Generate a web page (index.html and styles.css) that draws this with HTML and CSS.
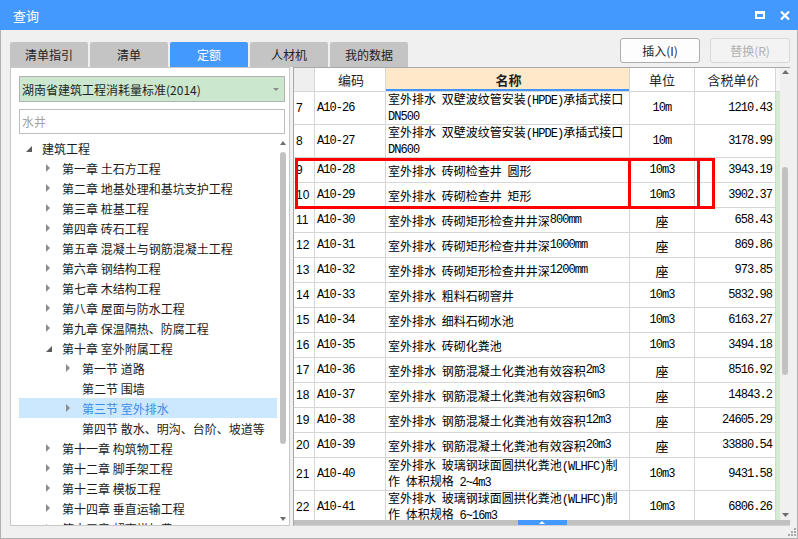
FILE: index.html
```html
<!DOCTYPE html>
<html lang="zh-CN">
<head>
<meta charset="utf-8">
<title>查询</title>
<link rel="stylesheet" href="styles.css">
</head>
<body>
<div class="win">
  <div class="titlebar">
    <span class="title">查询</span>
    <span class="tb-icons">
      <svg width="10" height="8" viewBox="0 0 10 8"><path fill="#fff" fill-rule="evenodd" d="M0 0H10V8H0Z M2 3H8V6H2Z"/></svg>
      <svg width="10" height="9" viewBox="0 0 10 9"><path d="M1 0.5L9 8.5M9 0.5L1 8.5" stroke="#fff" stroke-width="2.2" fill="none"/></svg>
    </span>
  </div>
  <div class="frame">
    <div class="toolbar">
      <div class="tabs">
        <div class="tab">清单指引</div>
        <div class="tab">清单</div>
        <div class="tab on">定额</div>
        <div class="tab">人材机</div>
        <div class="tab">我的数据</div>
      </div>
      <div class="btns">
        <button class="btn">插入(I)</button>
        <button class="btn dis">替换(R)</button>
      </div>
    </div>
    <div class="main">
      <div class="lpanel">
        <div class="combo"><span>湖南省建筑工程消耗量标准(2014)</span><svg width="6" height="3" viewBox="0 0 6 3"><path d="M0 0H6L3 3Z" fill="#8a8a8a"/></svg></div>
        <div class="search">水井</div>
        <div class="tree">
          <div class="tree-body">
            <div class="node l0"><svg class="tw" viewBox="0 0 10 20"><path d="M7 8V14H1Z" fill="#5c5c5c"/></svg>建筑工程</div>
            <div class="node l1"><svg class="tw" viewBox="0 0 10 20"><path d="M1 6L5 10L1 14Z" fill="#8c8c8c"/></svg>第一章 土石方工程</div>
            <div class="node l1"><svg class="tw" viewBox="0 0 10 20"><path d="M1 6L5 10L1 14Z" fill="#8c8c8c"/></svg>第二章 地基处理和基坑支护工程</div>
            <div class="node l1"><svg class="tw" viewBox="0 0 10 20"><path d="M1 6L5 10L1 14Z" fill="#8c8c8c"/></svg>第三章 桩基工程</div>
            <div class="node l1"><svg class="tw" viewBox="0 0 10 20"><path d="M1 6L5 10L1 14Z" fill="#8c8c8c"/></svg>第四章 砖石工程</div>
            <div class="node l1"><svg class="tw" viewBox="0 0 10 20"><path d="M1 6L5 10L1 14Z" fill="#8c8c8c"/></svg>第五章 混凝土与钢筋混凝土工程</div>
            <div class="node l1"><svg class="tw" viewBox="0 0 10 20"><path d="M1 6L5 10L1 14Z" fill="#8c8c8c"/></svg>第六章 钢结构工程</div>
            <div class="node l1"><svg class="tw" viewBox="0 0 10 20"><path d="M1 6L5 10L1 14Z" fill="#8c8c8c"/></svg>第七章 木结构工程</div>
            <div class="node l1"><svg class="tw" viewBox="0 0 10 20"><path d="M1 6L5 10L1 14Z" fill="#8c8c8c"/></svg>第八章 屋面与防水工程</div>
            <div class="node l1"><svg class="tw" viewBox="0 0 10 20"><path d="M1 6L5 10L1 14Z" fill="#8c8c8c"/></svg>第九章 保温隔热、防腐工程</div>
            <div class="node l1"><svg class="tw" viewBox="0 0 10 20"><path d="M7 8V14H1Z" fill="#5c5c5c"/></svg>第十章 室外附属工程</div>
            <div class="node l2"><svg class="tw" viewBox="0 0 10 20"><path d="M1 6L5 10L1 14Z" fill="#8c8c8c"/></svg>第一节 道路</div>
            <div class="node l2"><span class="tw"></span>第二节 围墙</div>
            <div class="node l2 sel"><svg class="tw" viewBox="0 0 10 20"><path d="M1 6L5 10L1 14Z" fill="#8c8c8c"/></svg>第三节 室外排水</div>
            <div class="node l2"><span class="tw"></span>第四节 散水、明沟、台阶、坡道等</div>
            <div class="node l1"><svg class="tw" viewBox="0 0 10 20"><path d="M1 6L5 10L1 14Z" fill="#8c8c8c"/></svg>第十一章 构筑物工程</div>
            <div class="node l1"><svg class="tw" viewBox="0 0 10 20"><path d="M1 6L5 10L1 14Z" fill="#8c8c8c"/></svg>第十二章 脚手架工程</div>
            <div class="node l1"><svg class="tw" viewBox="0 0 10 20"><path d="M1 6L5 10L1 14Z" fill="#8c8c8c"/></svg>第十三章 模板工程</div>
            <div class="node l1"><svg class="tw" viewBox="0 0 10 20"><path d="M1 6L5 10L1 14Z" fill="#8c8c8c"/></svg>第十四章 垂直运输工程</div>
            <div class="node l1"><svg class="tw" viewBox="0 0 10 20"><path d="M1 6L5 10L1 14Z" fill="#8c8c8c"/></svg>第十五章 超高增加费</div>
          </div>
          <div class="tsb">
            <svg class="sb-up" width="6" height="4" viewBox="0 0 6 4"><path d="M0 4L3 0L6 4Z" fill="#6e6e6e"/></svg>
            <div class="tthumb"></div>
            <svg class="sb-dn" width="6" height="4" viewBox="0 0 6 4"><path d="M0 0H6L3 4Z" fill="#6e6e6e"/></svg>
          </div>
        </div>
      </div>
      <div class="gwrap">
        <div class="garea">
          <div class="table">
            <div class="row hd">
              <div class="c-no"></div>
              <div class="c-code">编码</div>
              <div class="c-name">名称</div>
              <div class="c-unit">单位</div>
              <div class="c-price">含税单价</div>
              <div class="c-x"></div>
            </div>
            <div class="row h2"><div class="c-no">7</div><div class="c-code m">A10-26</div><div class="c-name"><span>室外排水 双壁波纹管安装<span class="m">(HPDE)</span>承插式接口<br><span class="m">DN500</span></span></div><div class="c-unit m">10m</div><div class="c-price m">1210.43</div><div class="c-x"></div></div>
            <div class="row h2"><div class="c-no">8</div><div class="c-code m">A10-27</div><div class="c-name"><span>室外排水 双壁波纹管安装<span class="m">(HPDE)</span>承插式接口<br><span class="m">DN600</span></span></div><div class="c-unit m">10m</div><div class="c-price m">3178.99</div><div class="c-x"></div></div>
            <div class="row"><div class="c-no">9</div><div class="c-code m">A10-28</div><div class="c-name">室外排水 砖砌检查井 圆形</div><div class="c-unit m">10m3</div><div class="c-price m">3943.19</div><div class="c-x"></div></div>
            <div class="row"><div class="c-no">10</div><div class="c-code m">A10-29</div><div class="c-name">室外排水 砖砌检查井 矩形</div><div class="c-unit m">10m3</div><div class="c-price m">3902.37</div><div class="c-x"></div></div>
            <div class="row"><div class="c-no">11</div><div class="c-code m">A10-30</div><div class="c-name">室外排水 砖砌矩形检查井井深<span class="m">800mm</span></div><div class="c-unit"><span class="zuo">座</span></div><div class="c-price m">658.43</div><div class="c-x"></div></div>
            <div class="row"><div class="c-no">12</div><div class="c-code m">A10-31</div><div class="c-name">室外排水 砖砌矩形检查井井深<span class="m">1000mm</span></div><div class="c-unit"><span class="zuo">座</span></div><div class="c-price m">869.86</div><div class="c-x"></div></div>
            <div class="row"><div class="c-no">13</div><div class="c-code m">A10-32</div><div class="c-name">室外排水 砖砌矩形检查井井深<span class="m">1200mm</span></div><div class="c-unit"><span class="zuo">座</span></div><div class="c-price m">973.85</div><div class="c-x"></div></div>
            <div class="row"><div class="c-no">14</div><div class="c-code m">A10-33</div><div class="c-name">室外排水 粗料石砌窨井</div><div class="c-unit m">10m3</div><div class="c-price m">5832.98</div><div class="c-x"></div></div>
            <div class="row"><div class="c-no">15</div><div class="c-code m">A10-34</div><div class="c-name">室外排水 细料石砌水池</div><div class="c-unit m">10m3</div><div class="c-price m">6163.27</div><div class="c-x"></div></div>
            <div class="row"><div class="c-no">16</div><div class="c-code m">A10-35</div><div class="c-name">室外排水 砖砌化粪池</div><div class="c-unit m">10m3</div><div class="c-price m">3494.18</div><div class="c-x"></div></div>
            <div class="row"><div class="c-no">17</div><div class="c-code m">A10-36</div><div class="c-name">室外排水 钢筋混凝土化粪池有效容积<span class="m">2m3</span></div><div class="c-unit"><span class="zuo">座</span></div><div class="c-price m">8516.92</div><div class="c-x"></div></div>
            <div class="row"><div class="c-no">18</div><div class="c-code m">A10-37</div><div class="c-name">室外排水 钢筋混凝土化粪池有效容积<span class="m">6m3</span></div><div class="c-unit"><span class="zuo">座</span></div><div class="c-price m">14843.2</div><div class="c-x"></div></div>
            <div class="row"><div class="c-no">19</div><div class="c-code m">A10-38</div><div class="c-name">室外排水 钢筋混凝土化粪池有效容积<span class="m">12m3</span></div><div class="c-unit"><span class="zuo">座</span></div><div class="c-price m">24605.29</div><div class="c-x"></div></div>
            <div class="row"><div class="c-no">20</div><div class="c-code m">A10-39</div><div class="c-name">室外排水 钢筋混凝土化粪池有效容积<span class="m">20m3</span></div><div class="c-unit"><span class="zuo">座</span></div><div class="c-price m">33880.54</div><div class="c-x"></div></div>
            <div class="row h2"><div class="c-no">21</div><div class="c-code m">A10-40</div><div class="c-name"><span>室外排水 玻璃钢球面圆拱化粪池<span class="m">(WLHFC)</span>制<br>作 体积规格 <span class="m">2~4m3</span></span></div><div class="c-unit m">10m3</div><div class="c-price m">9431.58</div><div class="c-x"></div></div>
            <div class="row h2"><div class="c-no">22</div><div class="c-code m">A10-41</div><div class="c-name"><span>室外排水 玻璃钢球面圆拱化粪池<span class="m">(WLHFC)</span>制<br>作 体积规格 <span class="m">6~16m3</span></span></div><div class="c-unit m">10m3</div><div class="c-price m">6806.26</div><div class="c-x"></div></div>
          </div>
          <div class="vsb">
            <svg class="vs-up" width="7" height="4" viewBox="0 0 7 4"><path d="M0 4L3.5 0L7 4Z" fill="#6e6e6e"/></svg>
            <div class="vthumb"></div>
            <svg class="vs-dn" width="7" height="4" viewBox="0 0 7 4"><path d="M0 0H7L3.5 4Z" fill="#6e6e6e"/></svg>
          </div>
        </div>
        <div class="hbar"><div class="handle"><svg width="6" height="3" viewBox="0 0 6 3"><path d="M0 3L3 0L6 3Z" fill="#fff"/></svg></div></div>
        <div class="mark mark1"></div>
        <div class="mark mark2"></div>
      </div>
    </div>
    <div class="status">
      <svg width="8" height="8" viewBox="0 0 8 8"><g fill="#a8a8a8"><rect x="6" y="0" width="2" height="2"/><rect x="3" y="3" width="2" height="2"/><rect x="6" y="3" width="2" height="2"/><rect x="0" y="6" width="2" height="2"/><rect x="3" y="6" width="2" height="2"/><rect x="6" y="6" width="2" height="2"/></g></svg>
    </div>
  </div>
</div>
</body>
</html>
```

FILE: styles.css
```css
* { box-sizing: border-box; margin: 0; padding: 0; }
html, body { width: 798px; height: 539px; overflow: hidden; }
body {
  font-family: "Noto Sans CJK SC", "Noto Sans", sans-serif;
  font-size: 12px;
  color: #1f1f1f;
  background: #f0f0f0;
}
.win { width: 798px; height: 539px; display: flex; flex-direction: column; }

.titlebar {
  height: 30px; flex: none;
  background: #4499ff;
  display: flex; align-items: center;
  padding: 0 8px 0 13px;
  color: #fff;
}
.title { font-size: 13px; flex: 1; }
.tb-icons { display: flex; align-items: center; gap: 15px; }

.frame {
  flex: 1; display: flex; flex-direction: column;
  border: 1px solid #b0b0b0; border-top: 0;
}

.toolbar { height: 37px; flex: none; display: flex; justify-content: space-between; padding: 0 7px 0 9px; }
.tabs { display: flex; gap: 2px; align-self: flex-end; }
.tab {
  width: 78px; height: 25px;
  background: #c4c4c4;
  border-radius: 2px 2px 0 0;
  display: flex; align-items: center; justify-content: center;
  font-size: 12px; color: #222;
}
.tab.on { background: #4499ff; color: #fff; }
.btns { display: flex; gap: 10px; padding-top: 8px; }
.btn {
  width: 80px; height: 25px;
  border: 1px solid #adadad; border-radius: 3px;
  background: #fdfdfd;
  font-family: "Noto Sans CJK SC", sans-serif; font-size: 12px; color: #1f1f1f;
}
.btn.dis { border-color: #d9d9d9; color: #b0b0b0; background: #f3f3f3; }

.main { height: 459px; flex: none; display: flex; gap: 3px; padding: 0 7px 0 9px; }

.lpanel {
  width: 280px; background: #fff;
  border: 1px solid #c8c8c8;
  padding: 8px 2px 0 8px;
  display: flex; flex-direction: column;
}
.combo {
  width: 266px; height: 26px; flex: none;
  background: #cbe7cd; border: 1px solid #b3b3b3;
  display: flex; align-items: center; justify-content: space-between;
  padding: 0 5px 0 2px;
}
.search {
  width: 266px; height: 25px; flex: none; margin-top: 7px;
  border: 1px solid #bdbdbd;
  display: flex; align-items: center; padding-left: 2px;
  color: #a3a3a3;
}
.tree { margin-top: 4px; height: 387px; display: flex; gap: 1px; overflow: hidden; }
.tree-body { width: 258px; overflow: hidden; }
.node { height: 20px; display: flex; align-items: center; white-space: nowrap; color: #1a1a1a; }
.node .tw { width: 10px; height: 20px; margin-right: 7px; flex: none; display: block; }
.l0 { padding-left: 6px; }
.l1 { padding-left: 26px; }
.l2 { padding-left: 46px; }
.node.sel { background: #cce8ff; color: #3b8de6; }
.tsb { width: 9px; display: flex; flex-direction: column; align-items: center; }
.sb-up { margin-top: 3px; flex: none; }
.tthumb { width: 6px; height: 292px; margin-top: 7px; background: #c2c2c2; border-radius: 3px; }
.sb-dn { margin-top: auto; margin-bottom: 4px; flex: none; }

.gwrap {
  width: 497px; position: relative;
  border-left: 1px solid #a8a8a8; border-top: 1px solid #a8a8a8; border-bottom: 1px solid #d0d0d0;
  background: #fff;
  display: flex; flex-direction: column;
}
.garea { height: 452px; flex: none; display: flex; overflow: hidden; }
.table { width: 486px; overflow: hidden; }
.row { display: grid; grid-template-columns: 21px 71px 244px 65px 81px 4px; height: 25px; }
.row.h2 { height: 33px; }
.row.hd { height: 24px; }
.row > div {
  border-right: 1px solid #d6d6d6; border-bottom: 1px solid #d6d6d6;
  display: flex; align-items: center;
  overflow: hidden; white-space: nowrap;
  color: #000;
}
.row > .c-x { border-right: 0; border-bottom: 0; background: #d3ebd3; }
.hd > .c-x { background: #f6f6f6; border-bottom: 1px solid #d6d6d6; }
.hd > div { justify-content: center; font-size: 13px; color: #1f1f1f; }
.hd > .c-no { background: #efefef; }
.hd > .c-name { background: #fde9ca; font-weight: bold; box-shadow: inset 0 -2px 0 #4096ff; }

.c-no { padding-left: 2px; font-family: "Liberation Sans", sans-serif; font-size: 12px; }
.c-code { padding-left: 2px; }
.c-name { padding-left: 2px; font-size: 12px; line-height: 13px; word-spacing: 3px; }
.c-unit { justify-content: center; }
.c-price { justify-content: flex-end; padding-right: 3px; }
.m { font-family: "Liberation Mono", monospace; font-size: 12px; letter-spacing: -0.95px; word-spacing: 0; }
.zuo { font-size: 13px; }

.vsb { width: 10px; background: #f0f0f0; display: flex; flex-direction: column; align-items: center; }
.vs-up { margin-top: 2px; flex: none; }
.vthumb { width: 6px; height: 208px; margin-top: 93px; background: #c2c2c2; border-radius: 3px; }
.vs-dn { margin-top: auto; margin-bottom: 3px; flex: none; }

.hbar { height: 5px; flex: none; background: #c1c1c1; display: flex; justify-content: center; }
.hbar .handle { width: 49px; background: #4499ff; display: flex; justify-content: center; align-items: center; }

.mark { position: absolute; border: 3px solid #ff0000; }
.mark1 { left: 1px; top: 90px; width: 405px; height: 51px; }
.mark2 { left: 334px; top: 90px; width: 87px; height: 51px; }

.status { flex: 1; display: flex; justify-content: flex-end; align-items: flex-end; padding: 0 1px 2px 0; }
```
